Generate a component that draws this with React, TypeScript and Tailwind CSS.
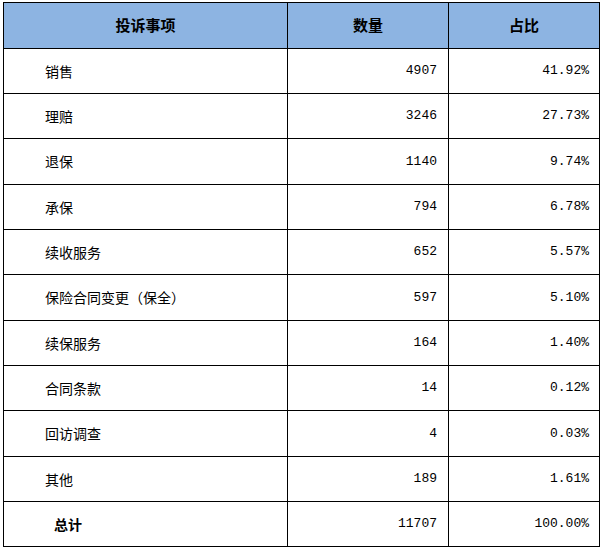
import React from "react";

const rows: { name: string; count: string; pct: string; h: number; bold?: boolean }[] = [
  { name: "销售", count: "4907", pct: "41.92%", h: 44 },
  { name: "理赔", count: "3246", pct: "27.73%", h: 44 },
  { name: "退保", count: "1140", pct: "9.74%", h: 45 },
  { name: "承保", count: "794", pct: "6.78%", h: 44 },
  { name: "续收服务", count: "652", pct: "5.57%", h: 44 },
  { name: "保险合同变更（保全）", count: "597", pct: "5.10%", h: 45 },
  { name: "续保服务", count: "164", pct: "1.40%", h: 44 },
  { name: "合同条款", count: "14", pct: "0.12%", h: 44 },
  { name: "回访调查", count: "4", pct: "0.03%", h: 45 },
  { name: "其他", count: "189", pct: "1.61%", h: 44 },
  { name: "总计", count: "11707", pct: "100.00%", h: 44, bold: true },
];

const cjk = { fontFamily: '"Noto Sans CJK SC", "Noto Sans", sans-serif' };
const mono = { fontFamily: '"Liberation Mono", "DejaVu Sans Mono", monospace' };

export default function App() {
  return (
    <div className="w-[601px] h-[548px] bg-white pt-[2px] pl-[3px]">
      <div className="w-[597px] border border-black text-black" style={cjk}>
        <div className="flex h-[46px] bg-[#8db4e2] border-b border-black">
          <div className="w-[284px] border-r border-black flex items-center justify-center text-[15px] font-bold">投诉事项</div>
          <div className="w-[161px] border-r border-black flex items-center justify-center text-[15px] font-bold">数量</div>
          <div className="flex-1 flex items-center justify-center text-[15px] font-bold">占比</div>
        </div>
        {rows.map((r, i) => (
          <div
            key={r.name}
            className={`flex ${i < rows.length - 1 ? "border-b border-black" : ""}`}
            style={{ height: i < rows.length - 1 ? r.h + 1 : r.h }}
          >
            <div
              className={`w-[284px] border-r border-black flex items-center text-[14px] ${
                r.bold ? "font-bold pl-[50px]" : "pl-[41px]"
              }`}
            >
              {r.name}
            </div>
            <div className="w-[161px] border-r border-black flex items-center justify-end pr-[11px] text-[13px]" style={mono}>
              {r.count}
            </div>
            <div className="flex-1 flex items-center justify-end pr-[10px] text-[13px]" style={mono}>
              {r.pct}
            </div>
          </div>
        ))}
      </div>
    </div>
  );
}
